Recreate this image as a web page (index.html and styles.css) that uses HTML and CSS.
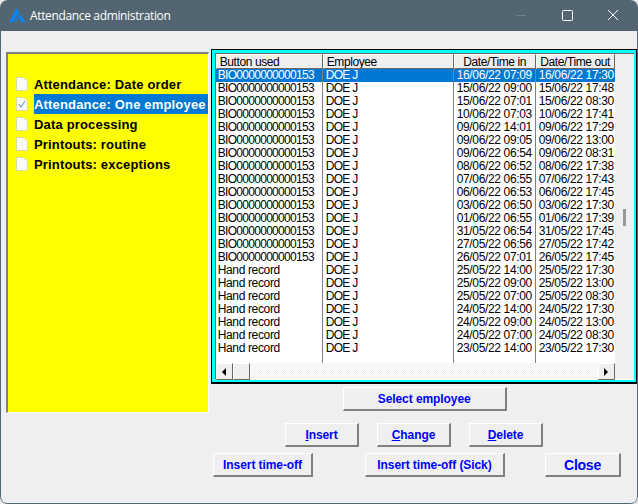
FILE: index.html
```html
<!DOCTYPE html>
<html lang="en">
<head>
	<meta charset="UTF-8">
	<title>Attendance administration</title>
	<link rel="stylesheet" href="styles.css">
</head>

<body>
	<div class="window">
		<div class="titlebar">
			<svg class="logo" width="17" height="15" viewBox="0 0 17 15">
				<path d="M7.5 0 L10.5 5 L3.5 14.5 H0 Z" fill="#0a84f0"/>
				<path d="M11.5 6.5 L17 14.5 H13 L10 10.5 L6 14.5 H5 Z" fill="#0a84f0"/>
			</svg>
			<span class="title">Attendance administration</span>
			<div class="controls">
				<svg width="46" height="31" viewBox="0 0 46 31"><path d="M18 15.5 H28" stroke="#6f808a" fill="none"/></svg>
				<svg width="46" height="31" viewBox="0 0 46 31"><rect x="18.5" y="10.5" width="10" height="10" rx="1" stroke="#fff" fill="none"/></svg>
				<svg width="46" height="31" viewBox="0 0 46 31"><path d="M18 10 L28 20 M28 10 L18 20" stroke="#fff" fill="none"/></svg>
			</div>
		</div>

		<div class="client">
			<div class="main">
				<div class="menu">
					<div class="item">
						<svg class="doc" width="12" height="14" viewBox="0 0 12 14"><path d="M0.5 0.5 H8 L11.5 4 V13.5 H0.5 Z" fill="#fbfbf6" stroke="#dcdca0"/></svg>
						<span class="label">Attendance: Date order</span>
					</div>
					<div class="item">
						<svg class="doc" width="12" height="14" viewBox="0 0 12 14"><path d="M0.5 0.5 H8 L11.5 4 V13.5 H0.5 Z" fill="#fbfbf6" stroke="#dcdca0"/><path d="M3 7 L5 10 L9 4" fill="none" stroke="#8aa4d8" stroke-width="1.3"/></svg>
						<span class="label selected">Attendance: One employee</span>
					</div>
					<div class="item">
						<svg class="doc" width="12" height="14" viewBox="0 0 12 14"><path d="M0.5 0.5 H8 L11.5 4 V13.5 H0.5 Z" fill="#fbfbf6" stroke="#dcdca0"/></svg>
						<span class="label">Data processing</span>
					</div>
					<div class="item">
						<svg class="doc" width="12" height="14" viewBox="0 0 12 14"><path d="M0.5 0.5 H8 L11.5 4 V13.5 H0.5 Z" fill="#fbfbf6" stroke="#dcdca0"/></svg>
						<span class="label">Printouts: routine</span>
					</div>
					<div class="item">
						<svg class="doc" width="12" height="14" viewBox="0 0 12 14"><path d="M0.5 0.5 H8 L11.5 4 V13.5 H0.5 Z" fill="#fbfbf6" stroke="#dcdca0"/></svg>
						<span class="label">Printouts: exceptions</span>
					</div>
				</div>

				<div class="right">
					<div class="gridframe">
						<div class="gridinner">
							<div class="gridleft">
								<table class="grid">
									<colgroup>
										<col class="c1"><col class="c2"><col class="c3"><col class="c4">
									</colgroup>
									<thead>
										<tr><th class="left">Button used</th><th class="left">Employee</th><th>Date/Time in</th><th>Date/Time out</th></tr>
									</thead>
									<tbody>
										<tr class="current"><td class="code">BIO0000000000153</td><td>DOE J</td><td>16/06/22 07:09</td><td>16/06/22 17:30</td></tr>
										<tr><td class="code">BIO0000000000153</td><td>DOE J</td><td>15/06/22 09:00</td><td>15/06/22 17:48</td></tr>
										<tr><td class="code">BIO0000000000153</td><td>DOE J</td><td>15/06/22 07:01</td><td>15/06/22 08:30</td></tr>
										<tr><td class="code">BIO0000000000153</td><td>DOE J</td><td>10/06/22 07:03</td><td>10/06/22 17:41</td></tr>
										<tr><td class="code">BIO0000000000153</td><td>DOE J</td><td>09/06/22 14:01</td><td>09/06/22 17:29</td></tr>
										<tr><td class="code">BIO0000000000153</td><td>DOE J</td><td>09/06/22 09:05</td><td>09/06/22 13:00</td></tr>
										<tr><td class="code">BIO0000000000153</td><td>DOE J</td><td>09/06/22 06:54</td><td>09/06/22 08:31</td></tr>
										<tr><td class="code">BIO0000000000153</td><td>DOE J</td><td>08/06/22 06:52</td><td>08/06/22 17:38</td></tr>
										<tr><td class="code">BIO0000000000153</td><td>DOE J</td><td>07/06/22 06:55</td><td>07/06/22 17:43</td></tr>
										<tr><td class="code">BIO0000000000153</td><td>DOE J</td><td>06/06/22 06:53</td><td>06/06/22 17:45</td></tr>
										<tr><td class="code">BIO0000000000153</td><td>DOE J</td><td>03/06/22 06:50</td><td>03/06/22 17:30</td></tr>
										<tr><td class="code">BIO0000000000153</td><td>DOE J</td><td>01/06/22 06:55</td><td>01/06/22 17:39</td></tr>
										<tr><td class="code">BIO0000000000153</td><td>DOE J</td><td>31/05/22 06:54</td><td>31/05/22 17:45</td></tr>
										<tr><td class="code">BIO0000000000153</td><td>DOE J</td><td>27/05/22 06:56</td><td>27/05/22 17:42</td></tr>
										<tr><td class="code">BIO0000000000153</td><td>DOE J</td><td>26/05/22 07:01</td><td>26/05/22 17:45</td></tr>
										<tr><td>Hand record</td><td>DOE J</td><td>25/05/22 14:00</td><td>25/05/22 17:30</td></tr>
										<tr><td>Hand record</td><td>DOE J</td><td>25/05/22 09:00</td><td>25/05/22 13:00</td></tr>
										<tr><td>Hand record</td><td>DOE J</td><td>25/05/22 07:00</td><td>25/05/22 08:30</td></tr>
										<tr><td>Hand record</td><td>DOE J</td><td>24/05/22 14:00</td><td>24/05/22 17:30</td></tr>
										<tr><td>Hand record</td><td>DOE J</td><td>24/05/22 09:00</td><td>24/05/22 13:00</td></tr>
										<tr><td>Hand record</td><td>DOE J</td><td>24/05/22 07:00</td><td>24/05/22 08:30</td></tr>
										<tr><td>Hand record</td><td>DOE J</td><td>23/05/22 14:00</td><td>23/05/22 17:30</td></tr>
										<tr class="filler"><td></td><td></td><td></td><td></td></tr>
									</tbody>
								</table>
								<div class="scrollbar">
									<div class="sbtn"><span class="arrow-left"></span></div>
									<div class="thumb"></div>
									<div class="track"></div>
									<div class="sbtn"><span class="arrow-right"></span></div>
								</div>
							</div>
							<div class="gutter"><div class="marker"></div></div>
						</div>
					</div>
					<button class="btn select">Select employee</button>
				</div>
			</div>

			<div class="row row1">
				<button class="btn small"><u>I</u>nsert</button>
				<button class="btn small"><u>C</u>hange</button>
				<button class="btn small"><u>D</u>elete</button>
			</div>
			<div class="row row2">
				<button class="btn timeoff">Insert time-off</button>
				<button class="btn sick">Insert time-off (Sick)</button>
				<button class="btn close">Close</button>
			</div>
		</div>
	</div>
</body>

</html>
```
FILE: styles.css
```css
*{
	margin: 0;
	padding: 0;
	box-sizing: border-box;
}
body{
	width: 638px;
	height: 504px;
	overflow: hidden;
	background-color: #e4e6e7;
}
.window{
	width: 638px;
	height: 504px;
	background-color: #526570;
	border-radius: 8px;
	padding: 0 1px 1px 1px;
	display: flex;
	flex-direction: column;
	overflow: hidden;
}

/* title bar */
.titlebar{
	height: 31px;
	display: flex;
	align-items: center;
	color: #fff;
	font: 12px "Open Sans", "Noto Sans", sans-serif;
	letter-spacing: -0.35px;
}
.logo{
	margin-left: 8px;
}
.title{
	margin-left: 4px;
	margin-top: -1px;
}
.controls{
	margin-left: auto;
	display: flex;
	margin-right: 1px;
}

/* client area */
.client{
	flex: 1;
	background-color: #efefef;
	border-radius: 0 0 6px 6px;
	padding: 18px 0 0 5px;
}
.main{
	display: flex;
	align-items: flex-start;
	gap: 2px;
}

/* left menu */
.menu{
	width: 203px;
	height: 361px;
	margin-top: 3px;
	background-color: #ff0;
	border-top: 2px solid #808080;
	border-left: 2px solid #808080;
	border-right: 1px solid #fff;
	border-bottom: 1px solid #fff;
	padding-top: 20px;
	font: bold 13px "Liberation Sans", sans-serif;
	letter-spacing: 0.17px;
}
.item{
	height: 20px;
	display: flex;
	align-items: center;
	padding-left: 8px;
}
.doc{
	flex: none;
	margin-right: 6px;
}
.label{
	flex: 1;
	height: 20px;
	line-height: 22px;
	color: #000;
	white-space: nowrap;
	overflow: hidden;
}
.selected{
	background-color: #0078d4;
	color: #fff;
}

/* data grid */
.right{
	width: 427px;
}
.gridframe{
	width: 426px;
	height: 335px;
	border: 1px solid #000;
	border-bottom-width: 2px;
	background-color: #0ff;
	padding: 3px 2px 2px 3px;
}
.gridinner{
	height: 100%;
	display: flex;
	background-color: #efefef;
	border-top: 1px solid #696969;
	border-left: 1px solid #696969;
	border-bottom: 1px solid #fff;
}
.gridleft{
	width: 399px;
	flex: none;
}
.grid{
	width: 399px;
	table-layout: fixed;
	border-collapse: separate;
	border-spacing: 0;
	background-color: #fff;
	font: 12px "Liberation Sans", sans-serif;
	color: #000;
}
.c1{ width: 107px; }
.c2{ width: 131px; }
.c3{ width: 82px; }
.c4{ width: 79px; }
.grid th{
	height: 15px;
	line-height: 12px;
	font-weight: normal;
	letter-spacing: -0.4px;
	background-color: #efefef;
	border-top: 1px solid #fff;
	border-left: 1px solid #fff;
	border-right: 1px solid #696969;
	border-bottom: 1px solid #696969;
	white-space: nowrap;
	overflow: hidden;
	text-align: center;
}
.grid th.left{
	text-align: left;
	padding-left: 3px;
}
.grid td{
	height: 13px;
	line-height: 13px;
	padding-left: 3px;
	letter-spacing: -0.35px;
	white-space: nowrap;
	overflow: hidden;
	border-right: 1px solid #808080;
}
.grid td:first-child{
	padding-left: 2px;
}
.grid td:nth-child(2){
	letter-spacing: -0.7px;
}
.grid td.code{
	letter-spacing: -0.7px;
}
.grid td:last-child{
	border-right: 0;
}
.grid tr.current td{
	background-color: #0078d4;
	color: #fff;
}
.grid tr.filler td{
	height: 8px;
}

/* scroll bar */
.scrollbar{
	height: 17px;
	display: flex;
}
.sbtn, .thumb{
	width: 17px;
	display: flex;
	align-items: center;
	justify-content: center;
	background-color: #efefef;
	border-top: 1px solid #fff;
	border-left: 1px solid #fff;
	border-right: 1px solid #696969;
	border-bottom: 1px solid #696969;
}
.track{
	flex: 1;
	background-color: #fff;
	background-image: conic-gradient(#efefef 25%, #fff 0 50%, #efefef 0 75%, #fff 0);
	background-size: 2px 2px;
}
.arrow-left{
	border-top: 4px solid transparent;
	border-bottom: 4px solid transparent;
	border-right: 4px solid #000;
}
.arrow-right{
	border-top: 4px solid transparent;
	border-bottom: 4px solid transparent;
	border-left: 4px solid #000;
}
.gutter{
	flex: 1;
	padding: 155px 0 0 8px;
}
.marker{
	width: 3px;
	height: 17px;
	background-color: #999;
}

/* buttons */
.btn{
	height: 24px;
	background-color: #efefef;
	border-top: 1px solid #fff;
	border-left: 1px solid #fff;
	border-right: 2px solid #808080;
	border-bottom: 2px solid #808080;
	color: #00f;
	font: bold 12px "Liberation Sans", sans-serif;
	letter-spacing: -0.08px;
	white-space: nowrap;
}
.select{
	display: block;
	width: 164px;
	margin: 3px 0 0 132px;
}
.row{
	display: flex;
}
.row1{
	margin: 10px 0 0 279px;
	gap: 18px;
}
.row2{
	margin: 6px 0 0 207px;
}
.small{
	width: 74px;
}
.timeoff{
	width: 100px;
}
.sick{
	width: 140px;
	margin-left: 52px;
}
.close{
	width: 76px;
	margin-left: 40px;
	font-size: 14px;
	letter-spacing: -0.25px;
}
```
